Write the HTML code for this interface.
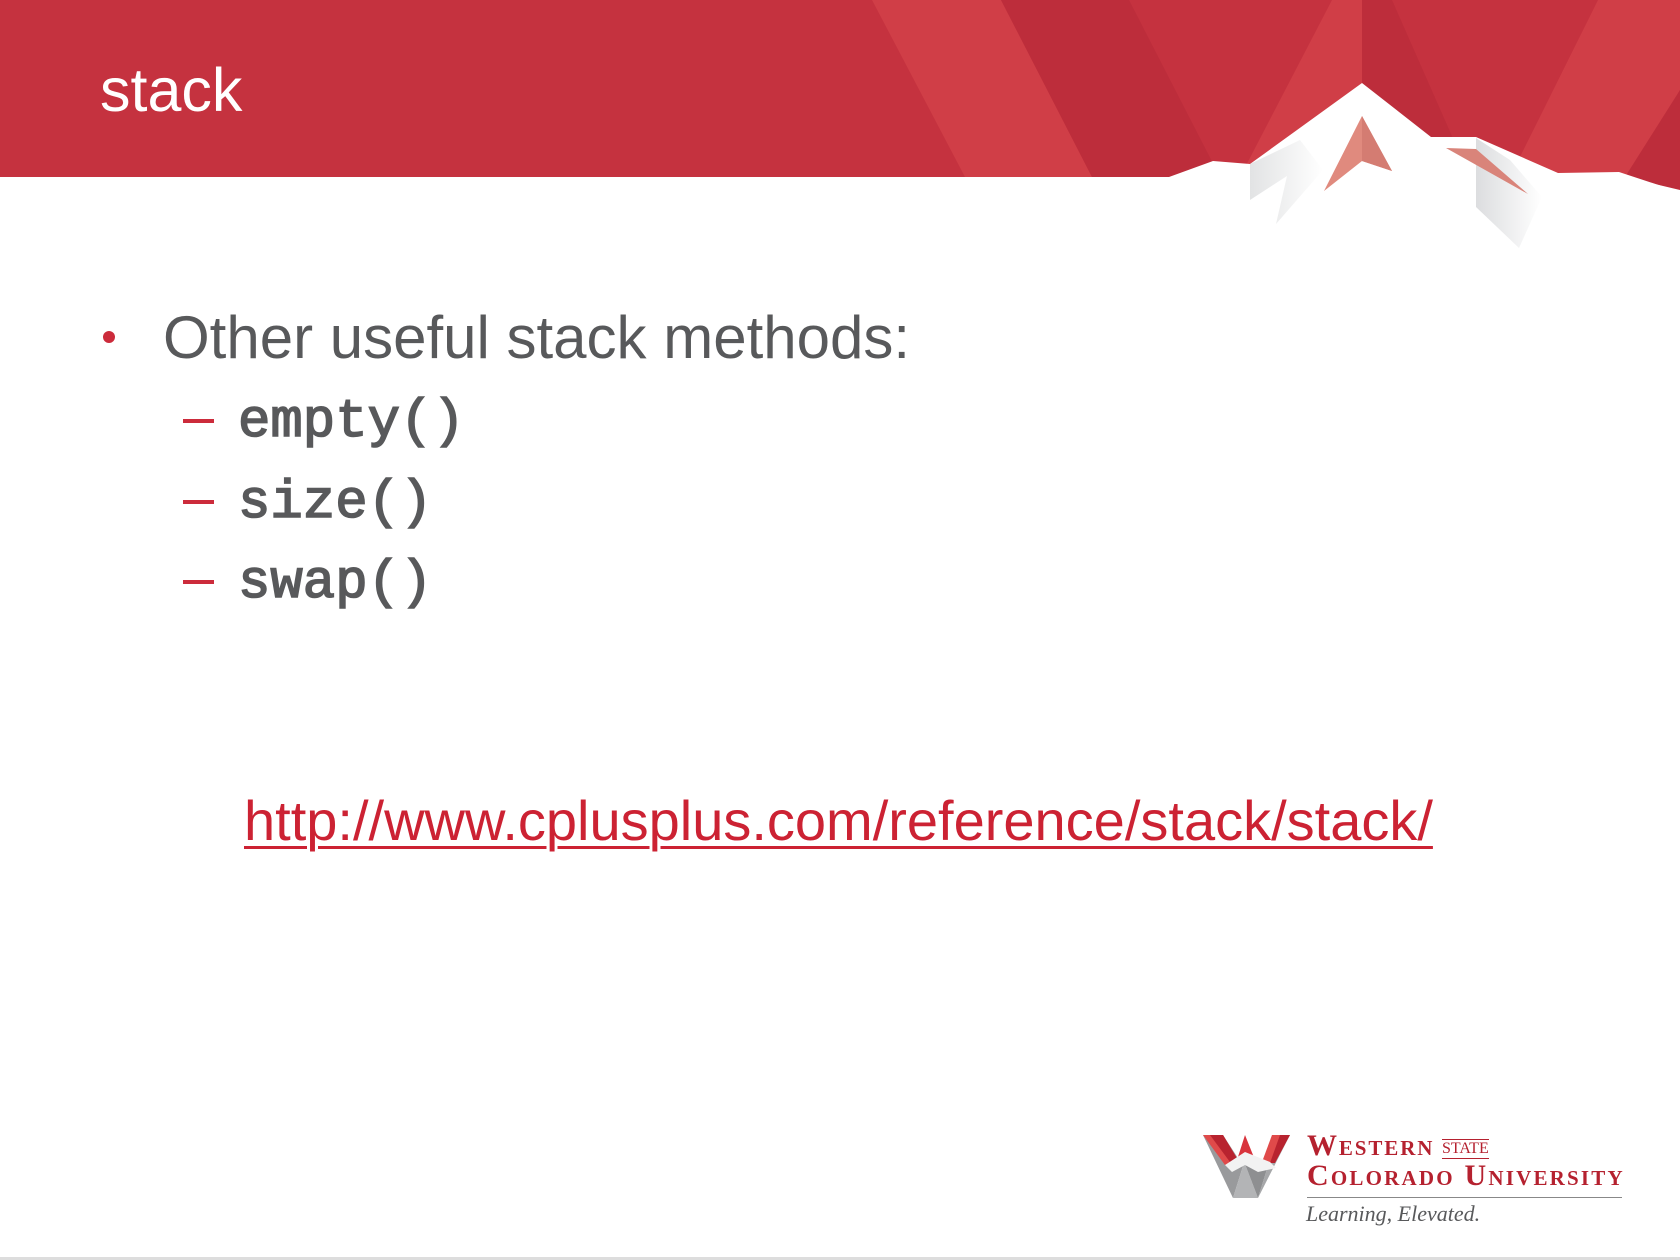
<!DOCTYPE html>
<html><head><meta charset="utf-8"><style>
html,body{margin:0;padding:0}
body{width:1680px;height:1260px;position:relative;overflow:hidden;background:#fff;font-family:"Liberation Sans",Arial,sans-serif}
.t{position:absolute;white-space:nowrap}
.m{font:54px/1 'Liberation Mono',monospace;color:#58595b;-webkit-text-stroke:1.6px #58595b}
</style></head><body>
<svg width="1680" height="260" style="position:absolute;left:0;top:0">
<defs>
<linearGradient id="g1" x1="0" x2="1" y1="0" y2="0"><stop offset="0" stop-color="#e2e3e4"/><stop offset="1" stop-color="#fff"/></linearGradient>
<linearGradient id="g2" x1="0" x2="1" y1="0" y2="0"><stop offset="0" stop-color="#dcdddf"/><stop offset="1" stop-color="#fff"/></linearGradient>
</defs>
<rect x="0" y="0" width="1680" height="177" fill="#c5323f"/>
<polygon points="872,0 1001,0 1092,177 965,177" fill="#d03e47"/>
<polygon points="1001,0 1129,0 1220,177 1092,177" fill="#bd2d3b"/>
<polygon points="1332,0 1362,0 1362,177 1240,177" fill="#d03e47"/>
<polygon points="1362,0 1392,0 1470,177 1362,177" fill="#bd2d3b"/>
<polygon points="1598,0 1680,0 1680,90 1633,177 1510,177" fill="#d03e47"/>
<polygon points="1680,90 1680,190 1625,177" fill="#bd2d3b"/>
<polygon points="1169,177 1213,161 1250,164 1362,83 1431,137 1476,137 1558,173 1619,172 1680,192 1680,260 0,260 0,177" fill="#fff"/>
<polygon points="1250,164 1250,200 1287,176 1276,224 1323,170 1300,140" fill="url(#g1)"/>
<polygon points="1476,138 1476,207 1519,248 1542,197 1510,160" fill="url(#g2)"/>
<polygon points="1362,116 1392,171 1362,161 1324,191" fill="#e08a7e"/>
<polygon points="1362,116 1392,171 1362,161" fill="#d47c72"/>
<polygon points="1446,148 1476,149 1528,194" fill="#d9847a"/>
</svg>
<div class="t" style="left:100px;top:60px;font-size:61px;color:#fff;line-height:1">stack</div>
<div style="position:absolute;left:103px;top:331px;width:12px;height:12px;border-radius:50%;background:#cc2b3b"></div>
<div class="t" style="left:163px;top:308px;font-size:60px;color:#58595b;line-height:1">Other useful stack methods:</div>
<div style="position:absolute;left:183px;top:419px;width:31px;height:4px;background:#cc2b3b"></div>
<div style="position:absolute;left:183px;top:500px;width:31px;height:4px;background:#cc2b3b"></div>
<div style="position:absolute;left:183px;top:580px;width:31px;height:4px;background:#cc2b3b"></div>
<div class="t m" style="left:238px;top:396px">empty()</div>
<div class="t m" style="left:238px;top:477px">size()</div>
<div class="t m" style="left:238px;top:557px">swap()</div>
<div class="t" style="left:244px;top:793px;font-size:56px;line-height:1;color:#cc2233;text-decoration:underline;text-decoration-thickness:3px;text-underline-offset:6px">http://www.cplusplus.com/reference/stack/stack/</div>
<svg width="100" height="72" style="position:absolute;left:1198px;top:1132px" viewBox="1198 1132 100 72">
<polygon points="1203,1135 1223,1135 1243,1166 1233,1198" fill="#999a9c"/>
<polygon points="1233,1198 1243,1166 1245,1164 1258,1198" fill="#b3b4b6"/>
<polygon points="1245,1164 1258,1198 1268,1166" fill="#8e8f91"/>
<polygon points="1258,1198 1268,1166 1272,1135 1290,1135" fill="#a6a7a9"/>
<polygon points="1203,1135 1223,1135 1238,1160 1225,1165" fill="#e04a4a"/>
<polygon points="1210,1135 1223,1135 1238,1160 1230,1162" fill="#b8232f"/>
<polygon points="1237,1160 1245,1135 1255,1160 1245,1155" fill="#d8333c"/>
<polygon points="1262,1162 1272,1135 1290,1135 1272,1162" fill="#e04a4a"/>
<polygon points="1280,1135 1290,1135 1275,1163 1270,1163" fill="#b8232f"/>
<polygon points="1225,1165 1245,1152 1270,1162 1276,1168 1258,1172 1245,1165 1232,1172" fill="#f2f2f2"/>
</svg>
<div class="t" style="left:1307px;top:1131px;font:bold 30px/1 'Liberation Serif',serif;color:#b5212f;font-variant:small-caps;letter-spacing:1.9px">Western</div>
<div class="t" style="left:1442px;top:1139px;font:16px/1 'Liberation Serif',serif;color:#b5212f;border-top:1px solid #b5212f;border-bottom:1px solid #b5212f;padding:1px 0">STATE</div>
<div class="t" style="left:1307px;top:1161px;font:bold 30px/1 'Liberation Serif',serif;color:#b5212f;font-variant:small-caps;letter-spacing:2.2px">Colorado University</div>
<div style="position:absolute;left:1307px;top:1197px;width:315px;height:1px;background:#888"></div>
<div class="t" style="left:1306px;top:1203px;font:italic 22px/1 'Liberation Serif',serif;color:#58595b">Learning, Elevated.</div>
<div style="position:absolute;left:0;top:1257px;width:1680px;height:3px;background:#ddd"></div>
</body></html>
